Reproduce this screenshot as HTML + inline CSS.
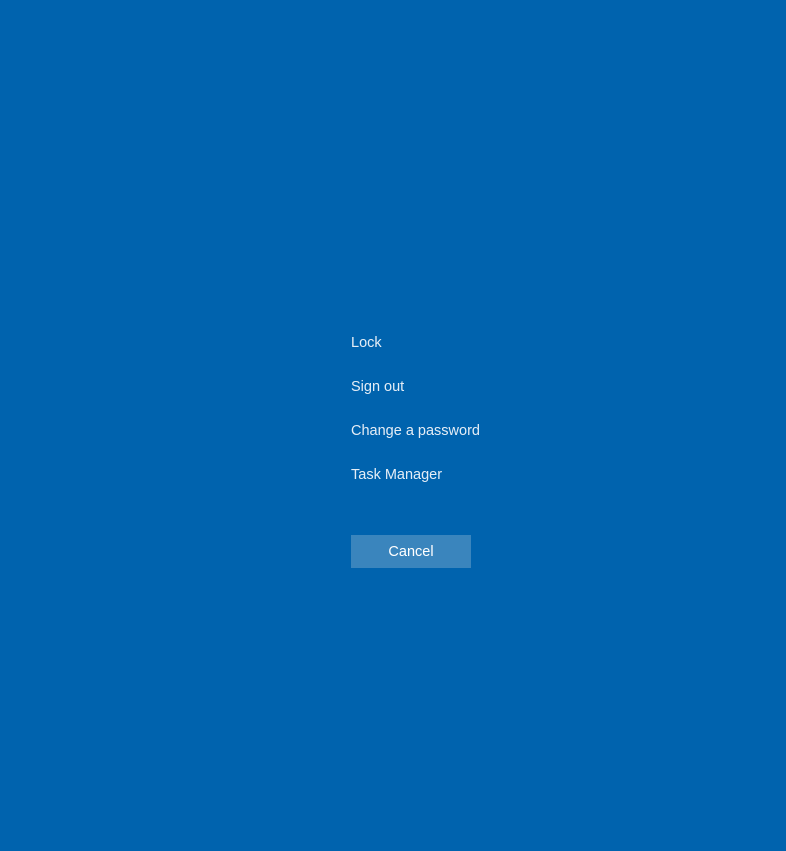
<!DOCTYPE html>
<html><head><style>
html,body{margin:0;padding:0;width:786px;height:851px;background:#0063ae;overflow:hidden;font-family:"Liberation Sans",sans-serif;}
.i{position:absolute;left:351px;color:#e4edf6;font-size:14.5px;line-height:18px;}
.b{position:absolute;left:351px;top:535px;width:120px;height:33px;background:#3a85bd;color:#fff;font-size:14.5px;line-height:35px;text-align:center;}
</style></head><body>
<div class="i" style="top:334px">Lock</div>
<div class="i" style="top:378px">Sign out</div>
<div class="i" style="top:422px">Change a password</div>
<div class="i" style="top:466px">Task Manager</div>
<div class="b">Cancel</div>
</body></html>
